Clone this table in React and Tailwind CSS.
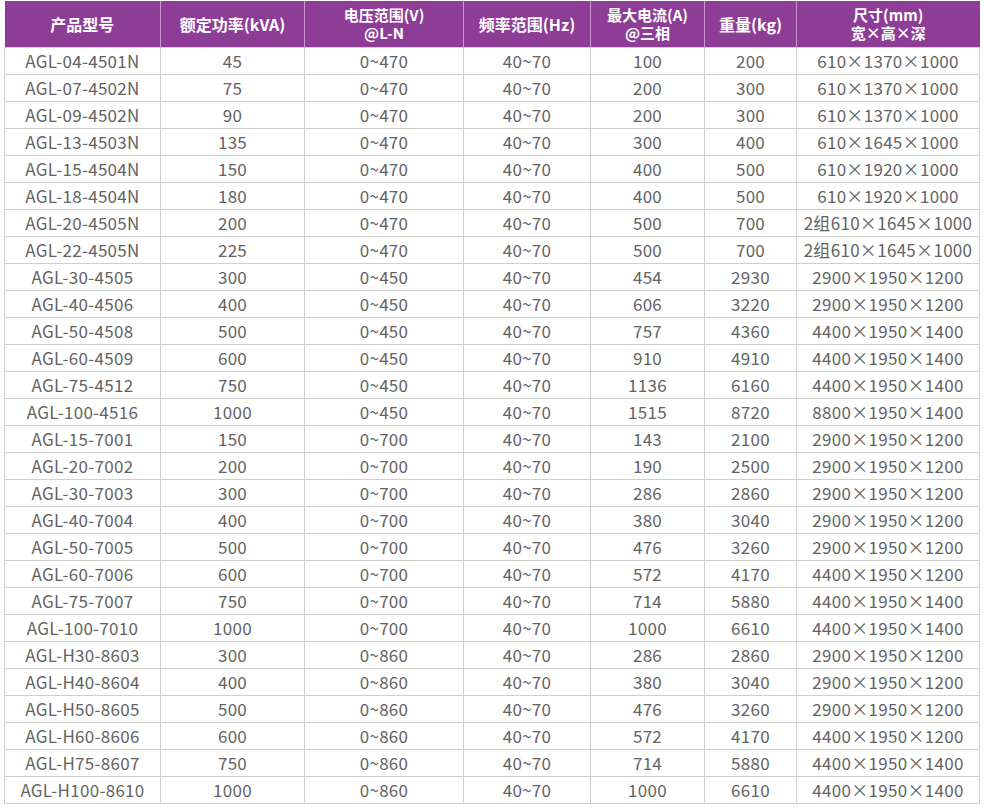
import React from 'react';

const rows = [
  ['AGL-04-4501N', '45', '0~470', '40~70', '100', '200', '610×1370×1000'],
  ['AGL-07-4502N', '75', '0~470', '40~70', '200', '300', '610×1370×1000'],
  ['AGL-09-4502N', '90', '0~470', '40~70', '200', '300', '610×1370×1000'],
  ['AGL-13-4503N', '135', '0~470', '40~70', '300', '400', '610×1645×1000'],
  ['AGL-15-4504N', '150', '0~470', '40~70', '400', '500', '610×1920×1000'],
  ['AGL-18-4504N', '180', '0~470', '40~70', '400', '500', '610×1920×1000'],
  ['AGL-20-4505N', '200', '0~470', '40~70', '500', '700', '2组610×1645×1000'],
  ['AGL-22-4505N', '225', '0~470', '40~70', '500', '700', '2组610×1645×1000'],
  ['AGL-30-4505', '300', '0~450', '40~70', '454', '2930', '2900×1950×1200'],
  ['AGL-40-4506', '400', '0~450', '40~70', '606', '3220', '2900×1950×1200'],
  ['AGL-50-4508', '500', '0~450', '40~70', '757', '4360', '4400×1950×1400'],
  ['AGL-60-4509', '600', '0~450', '40~70', '910', '4910', '4400×1950×1400'],
  ['AGL-75-4512', '750', '0~450', '40~70', '1136', '6160', '4400×1950×1400'],
  ['AGL-100-4516', '1000', '0~450', '40~70', '1515', '8720', '8800×1950×1400'],
  ['AGL-15-7001', '150', '0~700', '40~70', '143', '2100', '2900×1950×1200'],
  ['AGL-20-7002', '200', '0~700', '40~70', '190', '2500', '2900×1950×1200'],
  ['AGL-30-7003', '300', '0~700', '40~70', '286', '2860', '2900×1950×1200'],
  ['AGL-40-7004', '400', '0~700', '40~70', '380', '3040', '2900×1950×1200'],
  ['AGL-50-7005', '500', '0~700', '40~70', '476', '3260', '2900×1950×1200'],
  ['AGL-60-7006', '600', '0~700', '40~70', '572', '4170', '4400×1950×1200'],
  ['AGL-75-7007', '750', '0~700', '40~70', '714', '5880', '4400×1950×1400'],
  ['AGL-100-7010', '1000', '0~700', '40~70', '1000', '6610', '4400×1950×1400'],
  ['AGL-H30-8603', '300', '0~860', '40~70', '286', '2860', '2900×1950×1200'],
  ['AGL-H40-8604', '400', '0~860', '40~70', '380', '3040', '2900×1950×1200'],
  ['AGL-H50-8605', '500', '0~860', '40~70', '476', '3260', '2900×1950×1200'],
  ['AGL-H60-8606', '600', '0~860', '40~70', '572', '4170', '4400×1950×1200'],
  ['AGL-H75-8607', '750', '0~860', '40~70', '714', '5880', '4400×1950×1400'],
  ['AGL-H100-8610', '1000', '0~860', '40~70', '1000', '6610', '4400×1950×1400'],
];

const widths = ['w-[156px]', 'w-[144px]', 'w-[159px]', 'w-[127px]', 'w-[114px]', 'w-[92px]', 'w-[183px]'];

const App = () => {
  return (
    <div className="bg-white w-[984px] h-[808px] pl-[4px] pt-[1px]" style={{ fontFamily: '"Noto Sans CJK SC", "Noto Sans", sans-serif' }}>
      <table className="table-fixed border-collapse w-[976px]">
        <colgroup>
          {widths.map((w, i) => <col key={i} className={w} />)}
        </colgroup>
        <thead>
          <tr className="bg-[#8e3d97] h-[46px] text-white font-bold text-[15px] leading-[18px]">
            <th className="border-r border-[#c89bcd] text-[16px]">产品型号</th>
            <th className="border-r border-[#c89bcd] text-[16px]">额定功率(kVA)</th>
            <th className="border-r border-[#c89bcd] pt-[1px]">电压范围(V)<br />@L-N</th>
            <th className="border-r border-[#c89bcd] text-[16px]">频率范围(Hz)</th>
            <th className="border-r border-[#c89bcd] pt-[1px]">最大电流(A)<br />@三相</th>
            <th className="border-r border-[#c89bcd] text-[16px]">重量(kg)</th>
            <th className="pt-[1px]">尺寸(mm)<br />宽×高×深</th>
          </tr>
        </thead>
        <tbody>
          {rows.map((r, i) => (
            <tr key={i} className="h-[27px] text-[17px] tracking-[0.3px] text-[#636363] leading-none">
              {r.map((c, j) => (
                <td key={j} className="border border-[#cfcfcf] text-center p-0 whitespace-nowrap">{c}</td>
              ))}
            </tr>
          ))}
        </tbody>
      </table>
    </div>
  );
};

export default App;
